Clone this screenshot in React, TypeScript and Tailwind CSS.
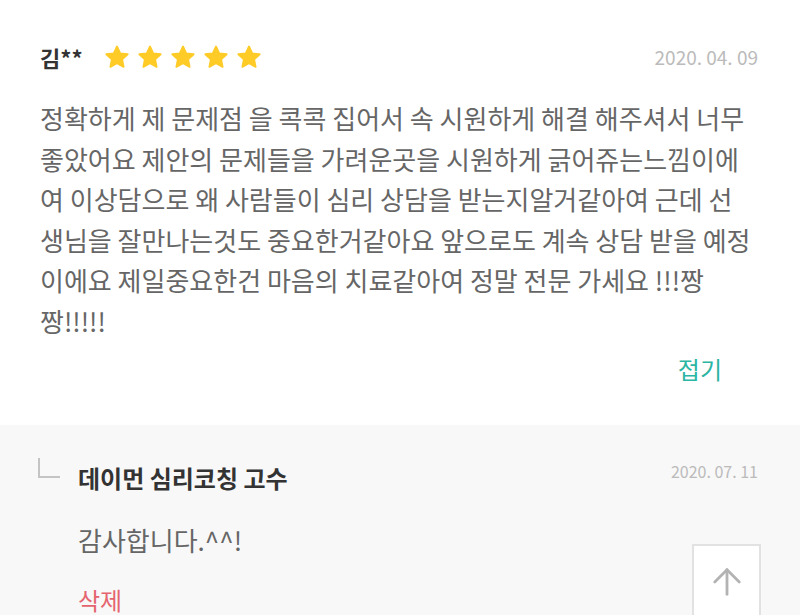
import { ArrowUp } from 'lucide-react';

const FONT = { fontFamily: '"Noto Sans CJK KR", "Noto Sans", sans-serif' };

const LINES = [
  '정확하게 제 문제점 을 콕콕 집어서 속 시원하게 해결 해주셔서 너무',
  '좋았어요 제안의 문제들을 가려운곳을 시원하게 긁어쥬는느낌이에',
  '여 이상담으로 왜 사람들이 심리 상담을 받는지알거같아여 근데 선',
  '생님을 잘만나는것도 중요한거같아요 앞으로도 계속 상담 받을 예정',
  '이에요 제일중요한건 마음의 치료같아여 정말 전문 가세요 !!!짱',
  '짱!!!!!',
];

function Star() {
  return (
    <svg width="28" height="27" viewBox="0 0 24 24">
      <path
        d="M12 2.2l2.9 6.1 6.6.8-4.9 4.6 1.3 6.6L12 17.1l-5.9 3.2 1.3-6.6L2.5 9.1l6.6-.8z"
        fill="#FFCB27"
        stroke="#FFCB27"
        strokeWidth="1.6"
        strokeLinejoin="round"
      />
    </svg>
  );
}

export default function App() {
  return (
    <div className="w-[800px] h-[615px] overflow-hidden bg-white relative" style={FONT}>
      {/* Review */}
      <div className="pl-[40px] pr-[40px] pt-[38px] h-[425px]">
        <div className="flex items-center h-[38px]">
          <span className="text-[22px] font-bold text-[#333]">김**</span>
          <div className="flex gap-[5px] ml-[20px]">
            {[0, 1, 2, 3, 4].map(i => <Star key={i} />)}
          </div>
          <span className="ml-auto mr-[2px] text-[19px] text-[#bbb]">2020. 04. 09</span>
        </div>
        <div className="mt-[22px] text-[26px] leading-[40.5px] text-[#666] whitespace-nowrap">
          {LINES.map(l => (
            <div key={l}>{l}</div>
          ))}
        </div>
        <div className="flex justify-end pr-[38px] mt-[10px]">
          <span className="text-[24px] text-[#2BB5A3]">접기</span>
        </div>
      </div>

      {/* Reply */}
      <div className="bg-[#f8f8f8] h-[190px] pl-[38px] pr-[42px] pt-[29px]">
        <div className="flex items-start">
          <div className="w-[22px] h-[20px] mt-[4px] border-l-2 border-b-2 border-[#c4c4c4]" />
          <div className="ml-[18px] flex-1">
            <div className="flex items-center h-[34px]">
              <span className="text-[24px] font-bold text-[#333] mt-[14px]">데이먼 심리코칭 고수</span>
              <span className="ml-auto text-[16px] text-[#bbb]">2020. 07. 11</span>
            </div>
            <p className="mt-[32px] text-[26px] text-[#666]">감사합니다.^^!</p>
            <p className="mt-[23px] text-[24px] text-[#E5646E]">삭제</p>
          </div>
        </div>
      </div>

      {/* Scroll to top */}
      <div className="absolute left-[692px] top-[544px] w-[69px] h-[80px] bg-white border-2 border-[#e2e2e2] flex justify-center pt-[15px]">
        <ArrowUp size={42} strokeWidth={1.6} color="#b3b3b3" />
      </div>
    </div>
  );
}
